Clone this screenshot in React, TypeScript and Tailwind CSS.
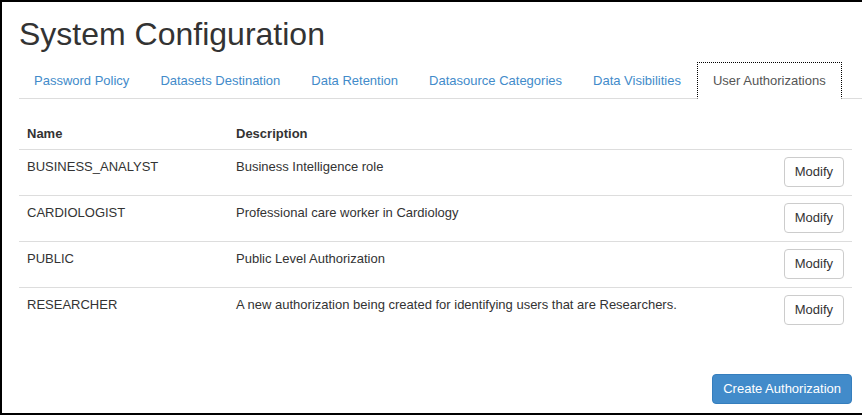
const tabs = [
  "Password Policy",
  "Datasets Destination",
  "Data Retention",
  "Datasource Categories",
  "Data Visibilities",
  "User Authorizations",
];

const roles = [
  { name: "BUSINESS_ANALYST", description: "Business Intelligence role" },
  { name: "CARDIOLOGIST", description: "Professional care worker in Cardiology" },
  { name: "PUBLIC", description: "Public Level Authorization" },
  {
    name: "RESEARCHER",
    description: "A new authorization being created for identifying users that are Researchers.",
  },
];

function TabBar({ active }: { active: string }) {
  return (
    <ul className="mt-[10px] flex border-b border-[#ddd]">
      {tabs.map((tab) => {
        const isActive = tab === active;
        return (
          <li key={tab} className="-mb-px mr-[1px]">
            <a
              href="#"
              className={
                isActive
                  ? "block border border-dotted border-black border-b-white bg-white px-[15px] py-[10px] text-[13px] leading-[15px] text-[#555]"
                  : "block px-[15px] pt-[11px] pb-[10px] text-[13px] leading-[15px] text-[#428bca]"
              }
            >
              {tab}
            </a>
          </li>
        );
      })}
    </ul>
  );
}

function AuthorizationTable() {
  return (
    <table className="w-full border-collapse text-left text-[13px] leading-[19px] text-[#333]">
      <thead>
        <tr className="border-b border-[#ddd]">
          <th className="w-[209px] px-[8px] pt-[8px] pb-[7px] leading-[17px] font-bold">Name</th>
          <th className="px-[8px] pt-[8px] pb-[7px] leading-[17px] font-bold">Description</th>
          <th className="px-[8px]" />
        </tr>
      </thead>
      <tbody>
        {roles.map((role) => (
          <tr key={role.name} className="border-t border-[#ddd] first:border-t-0">
            <td className="px-[8px] pt-[7px] pb-[8px] align-top">{role.name}</td>
            <td className="px-[8px] pt-[7px] pb-[8px] align-top">{role.description}</td>
            <td className="px-[8px] pt-[7px] pb-[8px] text-right align-top">
              <button className="h-[30px] rounded-[4px] border border-[#ccc] bg-white px-[10px] text-[13px] leading-[28px] text-[#333]">
                Modify
              </button>
            </td>
          </tr>
        ))}
      </tbody>
    </table>
  );
}

export default function App() {
  return (
    <div className="h-[415px] w-full overflow-hidden border-t-2 border-l-2 border-b-2 border-black bg-white pl-[17px] font-['Liberation_Sans',Arial,sans-serif]">
      <h1 className="mt-[15px] text-[32px] leading-[35px] font-normal text-[#333]">
        System Configuration
      </h1>
      <TabBar active="User Authorizations" />
      <div className="mr-[10px] mt-[18px]">
        <AuthorizationTable />
        <div className="mt-[41px] flex justify-end">
          <button className="h-[30px] rounded-[4px] border border-[#357ebd] bg-[#428bca] px-[10px] text-[13px] leading-[28px] text-white">
            Create Authorization
          </button>
        </div>
      </div>
    </div>
  );
}
